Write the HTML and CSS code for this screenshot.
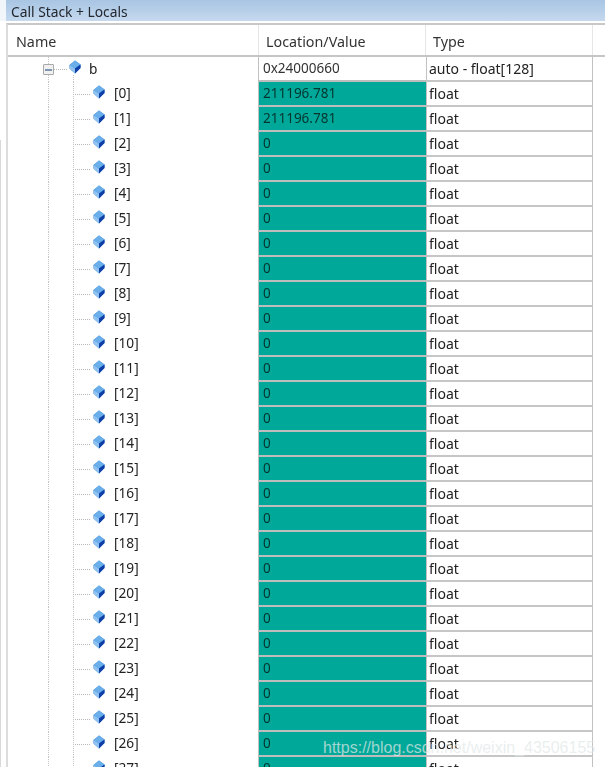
FILE: index.html
```html
<!DOCTYPE html>
<html lang="en">
<head>
<meta charset="utf-8">
<title>Call Stack + Locals</title>
<link rel="stylesheet" href="styles.css">
</head>
<body>
<svg class="defs" width="0" height="0" aria-hidden="true">
  <symbol id="gem" viewBox="0 0 12 14">
    <path d="M6 0.5 11.5 4.5 11.5 8 6 13.5 0.5 8.5 0.5 5Z" fill="#2f7fd6"/>
    <path d="M6 0.5 11.5 4.5 6 8.5 0.5 5Z" fill="#6aaeea"/>
    <path d="M0.5 5 6 8.5 6 13.5 0.5 8.5Z" fill="#8fc2f0"/>
    <path d="M6 8.5 11.5 4.5 11.5 8 6 13.5Z" fill="#0f3fa6"/>
  </symbol>
</svg>
<div class="window">
  <div class="side"></div>
  <main class="panel">
    <div class="titlebar">Call Stack + Locals</div>
    <div class="table">
      <div class="head">
        <div class="hcell hname">Name</div>
        <div class="hcell hvalue">Location/Value</div>
        <div class="hcell htype">Type</div>
        <div class="hcell hrest"></div>
      </div>
      <div class="row">
        <div class="name root"><span class="toggle"></span><span class="branch short"></span><svg class="gem"><use href="#gem"/></svg><span class="label">b</span></div>
        <div class="value plain">0x24000660</div>
        <div class="type">auto - float[128]</div>
      </div>
      <div class="row"><div class="name child"><span class="branch"></span><svg class="gem"><use href="#gem"/></svg><span class="label">[0]</span></div><div class="value">211196.781</div><div class="type">float</div></div>
      <div class="row"><div class="name child"><span class="branch"></span><svg class="gem"><use href="#gem"/></svg><span class="label">[1]</span></div><div class="value">211196.781</div><div class="type">float</div></div>
      <div class="row"><div class="name child"><span class="branch"></span><svg class="gem"><use href="#gem"/></svg><span class="label">[2]</span></div><div class="value">0</div><div class="type">float</div></div>
      <div class="row"><div class="name child"><span class="branch"></span><svg class="gem"><use href="#gem"/></svg><span class="label">[3]</span></div><div class="value">0</div><div class="type">float</div></div>
      <div class="row"><div class="name child"><span class="branch"></span><svg class="gem"><use href="#gem"/></svg><span class="label">[4]</span></div><div class="value">0</div><div class="type">float</div></div>
      <div class="row"><div class="name child"><span class="branch"></span><svg class="gem"><use href="#gem"/></svg><span class="label">[5]</span></div><div class="value">0</div><div class="type">float</div></div>
      <div class="row"><div class="name child"><span class="branch"></span><svg class="gem"><use href="#gem"/></svg><span class="label">[6]</span></div><div class="value">0</div><div class="type">float</div></div>
      <div class="row"><div class="name child"><span class="branch"></span><svg class="gem"><use href="#gem"/></svg><span class="label">[7]</span></div><div class="value">0</div><div class="type">float</div></div>
      <div class="row"><div class="name child"><span class="branch"></span><svg class="gem"><use href="#gem"/></svg><span class="label">[8]</span></div><div class="value">0</div><div class="type">float</div></div>
      <div class="row"><div class="name child"><span class="branch"></span><svg class="gem"><use href="#gem"/></svg><span class="label">[9]</span></div><div class="value">0</div><div class="type">float</div></div>
      <div class="row"><div class="name child"><span class="branch"></span><svg class="gem"><use href="#gem"/></svg><span class="label">[10]</span></div><div class="value">0</div><div class="type">float</div></div>
      <div class="row"><div class="name child"><span class="branch"></span><svg class="gem"><use href="#gem"/></svg><span class="label">[11]</span></div><div class="value">0</div><div class="type">float</div></div>
      <div class="row"><div class="name child"><span class="branch"></span><svg class="gem"><use href="#gem"/></svg><span class="label">[12]</span></div><div class="value">0</div><div class="type">float</div></div>
      <div class="row"><div class="name child"><span class="branch"></span><svg class="gem"><use href="#gem"/></svg><span class="label">[13]</span></div><div class="value">0</div><div class="type">float</div></div>
      <div class="row"><div class="name child"><span class="branch"></span><svg class="gem"><use href="#gem"/></svg><span class="label">[14]</span></div><div class="value">0</div><div class="type">float</div></div>
      <div class="row"><div class="name child"><span class="branch"></span><svg class="gem"><use href="#gem"/></svg><span class="label">[15]</span></div><div class="value">0</div><div class="type">float</div></div>
      <div class="row"><div class="name child"><span class="branch"></span><svg class="gem"><use href="#gem"/></svg><span class="label">[16]</span></div><div class="value">0</div><div class="type">float</div></div>
      <div class="row"><div class="name child"><span class="branch"></span><svg class="gem"><use href="#gem"/></svg><span class="label">[17]</span></div><div class="value">0</div><div class="type">float</div></div>
      <div class="row"><div class="name child"><span class="branch"></span><svg class="gem"><use href="#gem"/></svg><span class="label">[18]</span></div><div class="value">0</div><div class="type">float</div></div>
      <div class="row"><div class="name child"><span class="branch"></span><svg class="gem"><use href="#gem"/></svg><span class="label">[19]</span></div><div class="value">0</div><div class="type">float</div></div>
      <div class="row"><div class="name child"><span class="branch"></span><svg class="gem"><use href="#gem"/></svg><span class="label">[20]</span></div><div class="value">0</div><div class="type">float</div></div>
      <div class="row"><div class="name child"><span class="branch"></span><svg class="gem"><use href="#gem"/></svg><span class="label">[21]</span></div><div class="value">0</div><div class="type">float</div></div>
      <div class="row"><div class="name child"><span class="branch"></span><svg class="gem"><use href="#gem"/></svg><span class="label">[22]</span></div><div class="value">0</div><div class="type">float</div></div>
      <div class="row"><div class="name child"><span class="branch"></span><svg class="gem"><use href="#gem"/></svg><span class="label">[23]</span></div><div class="value">0</div><div class="type">float</div></div>
      <div class="row"><div class="name child"><span class="branch"></span><svg class="gem"><use href="#gem"/></svg><span class="label">[24]</span></div><div class="value">0</div><div class="type">float</div></div>
      <div class="row"><div class="name child"><span class="branch"></span><svg class="gem"><use href="#gem"/></svg><span class="label">[25]</span></div><div class="value">0</div><div class="type">float</div></div>
      <div class="row"><div class="name child"><span class="branch"></span><svg class="gem"><use href="#gem"/></svg><span class="label">[26]</span></div><div class="value">0</div><div class="type">float</div></div>
      <div class="row"><div class="name child"><span class="branch"></span><svg class="gem"><use href="#gem"/></svg><span class="label">[27]</span></div><div class="value">0</div><div class="type">float</div></div>
    </div>
  </main>
</div>
<div class="watermark">https://blog.csdn.net/weixin_43506155</div>
</body>
</html>
```
FILE: styles.css
```css
* { box-sizing: border-box; }
html, body { margin: 0; padding: 0; }
body {
  width: 605px;
  height: 767px;
  overflow: hidden;
  position: relative;
  background: #fff;
  color: #222;
  font-family: "Noto Sans", "Open Sans", sans-serif;
  font-size: 13.5px;
}
.defs { position: absolute; }
.window { display: flex; height: 767px; filter: blur(0.35px); }
.side {
  width: 6px;
  flex: none;
  background: linear-gradient(#f1f6fb 0, #f1f6fb 21px, #fff 21px, #fff 140px, #d9d9d9 140px, #d9d9d9 767px) no-repeat 0 0 / 1px 100%, linear-gradient(#f1f6fb 0, #f1f6fb 21px, #fff 21px) no-repeat;
}
.panel { flex: 1; min-width: 0; }
.titlebar {
  height: 21px;
  padding: 2px 0 0 5px;
  font-size: 13.8px;
  line-height: 19px;
  color: #23282f;
  background: linear-gradient(#a8c5e3, #c5d9ee);
}
.table {
  margin-top: 2px;
  border-top: 2px solid #c8c8c8;
  border-left: 2px solid #dcdcdc;
}
.head {
  display: flex;
  height: 32px;
  border-bottom: 2px solid #c6c6c6;
}
.hcell {
  padding: 6px 0 0 7px;
  font-size: 14.3px;
  line-height: 22px;
  color: #333;
  border-right: 1px solid #e6e6e6;
}
.hname { width: 251px; padding-left: 8px; }
.hvalue { width: 167px; }
.htype { width: 167px; }
.hrest { flex: 1; border-right: 0; }
.row {
  display: flex;
  height: 25px;
  line-height: 23px;
}
.name {
  width: 250px;
  flex: none;
  display: flex;
  align-items: center;
  background-image: linear-gradient(#c4c4c4 50%, transparent 50%);
  background-size: 1px 2px;
  background-repeat: repeat-y;
  background-position: 40px 0;
}
.root { padding-left: 35px; position: relative; }
.child { padding-left: 65px; position: relative; }
.child::before {
  content: "";
  position: absolute;
  left: 65px;
  top: 0;
  bottom: 0;
  width: 1px;
  background: linear-gradient(#c4c4c4 50%, transparent 50%) 0 0 / 1px 2px repeat-y;
}
.root::before {
  content: "";
  position: absolute;
  left: 65px;
  top: 18px;
  bottom: 0;
  width: 1px;
  background: linear-gradient(#c4c4c4 50%, transparent 50%) 0 0 / 1px 2px repeat-y;
}
.toggle {
  width: 11px;
  height: 11px;
  flex: none;
  border: 1px solid #a9a9a9;
  border-radius: 1px;
  background: linear-gradient(#7f95b0, #7f95b0) center / 7px 2px no-repeat, #f0f0f0;
}
.branch {
  width: 17px;
  flex: none;
  border-top: 1px dotted #b8b8b8;
}
.branch.short { width: 13px; }
.gem {
  width: 12px;
  height: 14px;
  flex: none;
  margin: -6px 0 0 3px;
}
.root .gem { margin-left: 2px; }
.label {
  margin: -4px 0 0 9px;
  font-size: 13.7px;
  color: #222;
}
.root .label { margin-top: -2px; margin-left: 8px; }
.value {
  width: 168px;
  flex: none;
  padding-left: 4px;
  background: #00a899;
  color: #04352f;
  border-left: 1px solid #c2c2c2;
  border-bottom: 2px solid #bdbdbd;
}
.value.plain { background: #fff; color: #333; }
.type {
  width: 167px;
  flex: none;
  padding-left: 2px;
  font-size: 14px;
  background: #fff;
  border-left: 1px solid #c2c2c2;
  border-right: 1px solid #c2c2c2;
  border-bottom: 2px solid #c6c6c6;
  color: #222;
}
.watermark {
  position: absolute;
  left: 323px;
  top: 737px;
  font-family: "Liberation Sans", sans-serif;
  font-size: 16px;
  line-height: 22px;
  white-space: nowrap;
  color: rgba(225, 232, 232, 0.72);
}
```
